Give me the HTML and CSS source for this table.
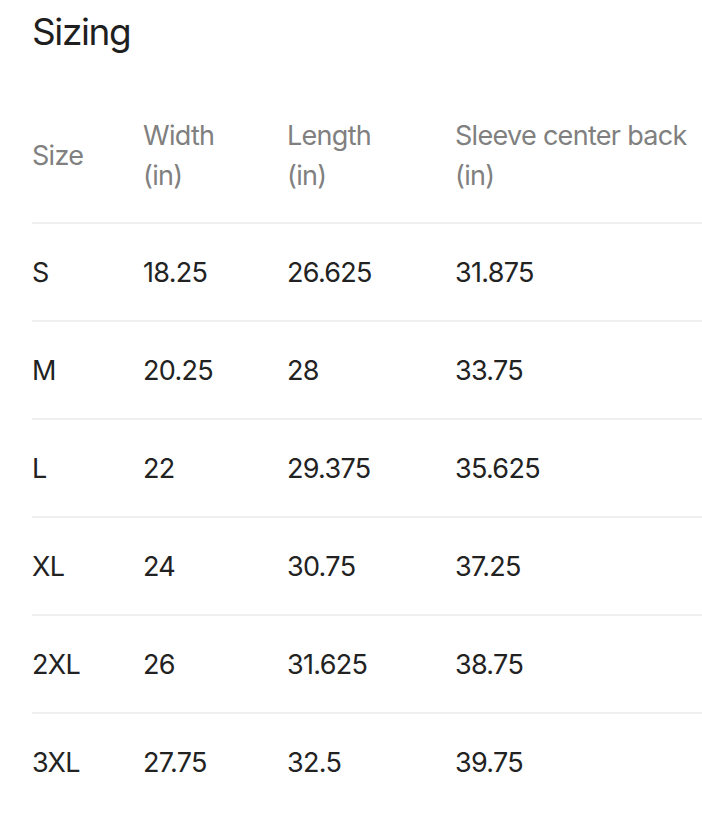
FILE: index.html
```html
<!DOCTYPE html>
<html lang="en">
<head>
<meta charset="utf-8">
<title>Sizing</title>
<link rel="stylesheet" href="styles.css">
</head>
<body>
<main class="page">
  <h1 class="title">Sizing</h1>
  <table class="sizes">
    <thead>
      <tr>
        <th class="c-size">Size</th>
        <th class="c-width">Width<br>(in)</th>
        <th class="c-length">Length<br>(in)</th>
        <th class="c-sleeve">Sleeve center back<br>(in)</th>
      </tr>
    </thead>
    <tbody>
      <tr><td>S</td><td>18.25</td><td>26.625</td><td>31.875</td></tr>
      <tr><td>M</td><td>20.25</td><td>28</td><td>33.75</td></tr>
      <tr><td>L</td><td>22</td><td>29.375</td><td>35.625</td></tr>
      <tr><td>XL</td><td>24</td><td>30.75</td><td>37.25</td></tr>
      <tr><td>2XL</td><td>26</td><td>31.625</td><td>38.75</td></tr>
      <tr><td>3XL</td><td>27.75</td><td>32.5</td><td>39.75</td></tr>
    </tbody>
  </table>
</main>
</body>
</html>
```
FILE: styles.css
```css
html, body {
  margin: 0;
  padding: 0;
  background: #ffffff;
}
body {
  font-family: "Inter", "Liberation Sans", sans-serif;
  color: #222222;
}
.page {
  padding: 8px 0 0 32px;
}
.title {
  margin: 0;
  font-size: 37px;
  font-weight: 400;
  line-height: 48px;
  letter-spacing: -1.4px;
  color: #1f1f1f;
}
.sizes {
  margin-top: 54px;
  width: 670px;
  border-collapse: collapse;
  font-size: 27px;
  letter-spacing: -0.7px;
}
.sizes th {
  font-weight: 400;
  color: #808080;
  text-align: left;
  vertical-align: middle;
  line-height: 40px;
  padding: 6px 0 26px;
}
.sizes td {
  height: 96px;
  padding: 0;
  vertical-align: middle;
  border-top: 2px solid #efefef;
  color: #222222;
}
.c-size { width: 111px; }
.c-width { width: 144px; }
.c-length { width: 168px; }
```
